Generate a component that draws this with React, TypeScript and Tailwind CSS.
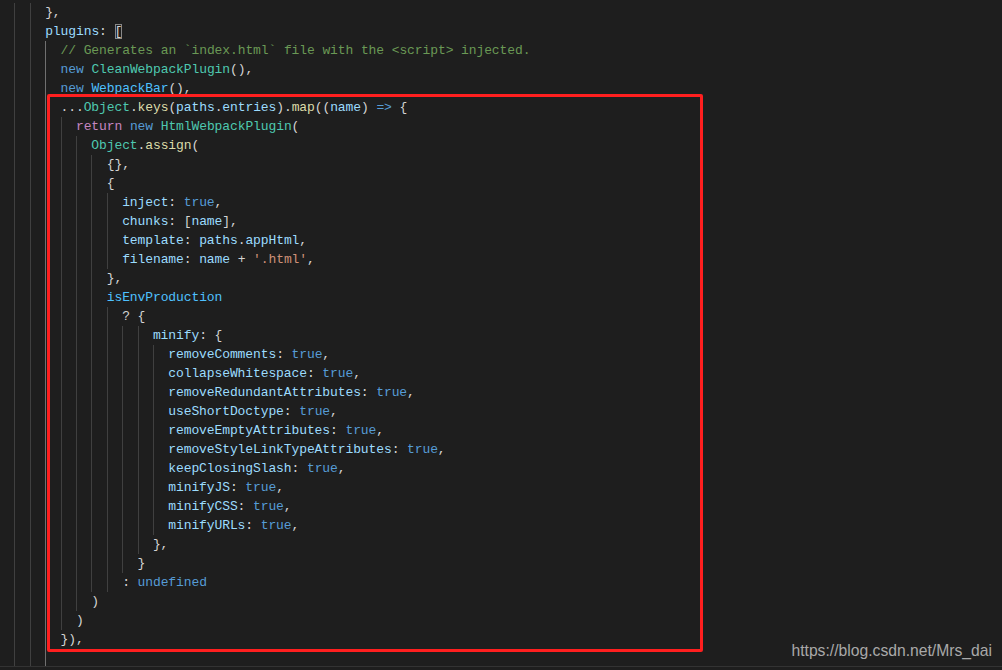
import React from 'react';

type Tok = [string, string];

const D = 'text-[#d4d4d4]';
const K = 'text-[#569cd6]';
const P = 'text-[#c586c0]';
const T = 'text-[#4ec9b0]';
const V = 'text-[#9cdcfe]';
const F = 'text-[#dcdcaa]';
const S = 'text-[#ce9178]';
const C = 'text-[#6a9955]';
const N = 'text-[#4fc1ff]';

const opt = (key: string): Tok[] => [[V, key], [D, ': '], [K, 'true'], [D, ',']];

// [indent in columns, tokens]
const lines: [number, Tok[]][] = [
  [6, [[D, '},']]],
  [6, [[V, 'plugins'], [D, ': '], ['bracket', '[']]],
  [8, [[C, '// Generates an `index.html` file with the <script> injected.']]],
  [8, [[K, 'new '], [T, 'CleanWebpackPlugin'], [D, '(),']]],
  [8, [[K, 'new '], [N, 'WebpackBar'], [D, '(),']]],
  [8, [[D, '...'], [T, 'Object'], [D, '.'], [F, 'keys'], [D, '('], [V, 'paths'], [D, '.'], [V, 'entries'], [D, ').'], [F, 'map'], [D, '(('], [V, 'name'], [D, ') '], [K, '=>'], [D, ' {']]],
  [10, [[P, 'return '], [K, 'new '], [T, 'HtmlWebpackPlugin'], [D, '(']]],
  [12, [[T, 'Object'], [D, '.'], [F, 'assign'], [D, '(']]],
  [14, [[D, '{},']]],
  [14, [[D, '{']]],
  [16, opt('inject')],
  [16, [[V, 'chunks'], [D, ': ['], [V, 'name'], [D, '],']]],
  [16, [[V, 'template'], [D, ': '], [V, 'paths'], [D, '.'], [V, 'appHtml'], [D, ',']]],
  [16, [[V, 'filename'], [D, ': '], [V, 'name'], [D, ' + '], [S, "'.html'"], [D, ',']]],
  [14, [[D, '},']]],
  [14, [[N, 'isEnvProduction']]],
  [16, [[D, '? {']]],
  [20, [[V, 'minify'], [D, ': {']]],
  [22, opt('removeComments')],
  [22, opt('collapseWhitespace')],
  [22, opt('removeRedundantAttributes')],
  [22, opt('useShortDoctype')],
  [22, opt('removeEmptyAttributes')],
  [22, opt('removeStyleLinkTypeAttributes')],
  [22, opt('keepClosingSlash')],
  [22, opt('minifyJS')],
  [22, opt('minifyCSS')],
  [22, opt('minifyURLs')],
  [20, [[D, '},']]],
  [18, [[D, '}']]],
  [16, [[D, ': '], [K, 'undefined']]],
  [12, [[D, ')']]],
  [10, [[D, ')']]],
  [8, [[D, '}),']]],
  [8, []],
];

const CodeLine: React.FC<{ indent: number; toks: Tok[]; row: number }> = ({ indent, toks, row }) => {
  const units = Array.from({ length: indent / 2 });
  return (
    <div className="flex h-[19px] items-center ml-[-1px] whitespace-pre">
      {units.map((_, k) => (
        <span
          key={k}
          className={
            k === 0
              ? 'w-[15.4px] h-full shrink-0'
              : k === 3 && row >= 2
              ? 'w-[15.4px] h-full shrink-0 border-l border-[#707070]'
              : 'w-[15.4px] h-full shrink-0 border-l border-[#404040]'
          }
        />
      ))}
      <span className="leading-[19px]">
        {toks.map(([cls, text], i) =>
          cls === 'bracket' ? (
            <span
              key={i}
              className="inline-block h-[15px] leading-[15px] text-[#d4d4d4] shadow-[inset_0_0_0_1px_#888888]"
            >
              {text}
            </span>
          ) : (
            <span key={i} className={cls}>
              {text}
            </span>
          )
        )}
      </span>
    </div>
  );
};

export default function App() {
  return (
    <div className="relative w-[1002px] h-[670px] overflow-hidden bg-[#1e1e1e] flex flex-col">
      <div
        className="h-[666px] overflow-hidden pt-[3px] text-[13px] tracking-[-0.1px]"
        style={{ fontFamily: '"Liberation Mono", "DejaVu Sans Mono", monospace' }}
      >
        {lines.map(([indent, toks], i) => (
          <CodeLine key={i} indent={indent} toks={toks} row={i} />
        ))}
      </div>
      <div className="h-px bg-[#333333]" />
      <div className="flex-1" />

      {/* annotation */}
      <div className="absolute left-[47px] top-[94px] w-[656px] h-[558px] border-[3px] border-[#ff1f1f] rounded-[2px]" />
      <div
        className="absolute right-[10px] top-[641px] text-[15.7px] leading-[20px] text-[#a9a9a9]"
        style={{ fontFamily: '"Liberation Sans", Arial, sans-serif' }}
      >
        https://blog.csdn.net/Mrs_dai
      </div>
    </div>
  );
}
